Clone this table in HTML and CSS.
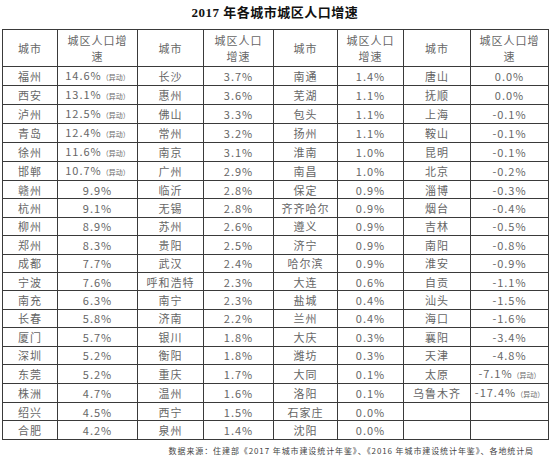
FILE: index.html
```html
<!DOCTYPE html>
<html lang="zh">
<head>
<meta charset="utf-8">
<link rel="stylesheet" href="styles.css">
</head>
<body>
<div class="page">
  <h1 class="title">2017 年各城市城区人口增速</h1>
  <table class="grid">
    <colgroup>
      <col class="c1"><col class="c2"><col class="c3"><col class="c4">
      <col class="c5"><col class="c6"><col class="c7"><col class="c8">
    </colgroup>
    <thead>
      <tr>
        <th>城市</th><th>城区人口增<br>速</th>
        <th>城市</th><th>城区人口<br>增速</th>
        <th>城市</th><th>城区人口<br>增速</th>
        <th>城市</th><th>城区人口增<br>速</th>
      </tr>
    </thead>
    <tbody>
      <tr><td>福州</td><td>14.6%<span class="note">（异动）</span></td><td>长沙</td><td>3.7%</td><td>南通</td><td>1.4%</td><td>唐山</td><td>0.0%</td></tr>
      <tr><td>西安</td><td>13.1%<span class="note">（异动）</span></td><td>惠州</td><td>3.6%</td><td>芜湖</td><td>1.1%</td><td>抚顺</td><td>0.0%</td></tr>
      <tr><td>泸州</td><td>12.5%<span class="note">（异动）</span></td><td>佛山</td><td>3.3%</td><td>包头</td><td>1.1%</td><td>上海</td><td>-0.1%</td></tr>
      <tr><td>青岛</td><td>12.4%<span class="note">（异动）</span></td><td>常州</td><td>3.2%</td><td>扬州</td><td>1.1%</td><td>鞍山</td><td>-0.1%</td></tr>
      <tr><td>徐州</td><td>11.6%<span class="note">（异动）</span></td><td>南京</td><td>3.1%</td><td>淮南</td><td>1.0%</td><td>昆明</td><td>-0.1%</td></tr>
      <tr><td>邯郸</td><td>10.7%<span class="note">（异动）</span></td><td>广州</td><td>2.9%</td><td>南昌</td><td>1.0%</td><td>北京</td><td>-0.2%</td></tr>
      <tr><td>赣州</td><td>9.9%</td><td>临沂</td><td>2.8%</td><td>保定</td><td>0.9%</td><td>淄博</td><td>-0.3%</td></tr>
      <tr><td>杭州</td><td>9.1%</td><td>无锡</td><td>2.8%</td><td>齐齐哈尔</td><td>0.9%</td><td>烟台</td><td>-0.4%</td></tr>
      <tr><td>柳州</td><td>8.9%</td><td>苏州</td><td>2.6%</td><td>遵义</td><td>0.9%</td><td>吉林</td><td>-0.5%</td></tr>
      <tr><td>郑州</td><td>8.3%</td><td>贵阳</td><td>2.5%</td><td>济宁</td><td>0.9%</td><td>南阳</td><td>-0.8%</td></tr>
      <tr><td>成都</td><td>7.7%</td><td>武汉</td><td>2.4%</td><td>哈尔滨</td><td>0.9%</td><td>淮安</td><td>-0.9%</td></tr>
      <tr><td>宁波</td><td>7.6%</td><td>呼和浩特</td><td>2.3%</td><td>大连</td><td>0.6%</td><td>自贡</td><td>-1.1%</td></tr>
      <tr><td>南充</td><td>6.3%</td><td>南宁</td><td>2.3%</td><td>盐城</td><td>0.4%</td><td>汕头</td><td>-1.5%</td></tr>
      <tr><td>长春</td><td>5.8%</td><td>济南</td><td>2.2%</td><td>兰州</td><td>0.4%</td><td>海口</td><td>-1.6%</td></tr>
      <tr><td>厦门</td><td>5.7%</td><td>银川</td><td>1.8%</td><td>大庆</td><td>0.3%</td><td>襄阳</td><td>-3.4%</td></tr>
      <tr><td>深圳</td><td>5.2%</td><td>衡阳</td><td>1.8%</td><td>潍坊</td><td>0.3%</td><td>天津</td><td>-4.8%</td></tr>
      <tr><td>东莞</td><td>5.2%</td><td>重庆</td><td>1.7%</td><td>大同</td><td>0.1%</td><td>太原</td><td>-7.1%<span class="note">（异动）</span></td></tr>
      <tr><td>株洲</td><td>4.7%</td><td>温州</td><td>1.6%</td><td>洛阳</td><td>0.1%</td><td>乌鲁木齐</td><td>-17.4%<span class="note">（异动）</span></td></tr>
      <tr><td>绍兴</td><td>4.5%</td><td>西宁</td><td>1.5%</td><td>石家庄</td><td>0.0%</td><td></td><td></td></tr>
      <tr><td>合肥</td><td>4.2%</td><td>泉州</td><td>1.4%</td><td>沈阳</td><td>0.0%</td><td></td><td></td></tr>
    </tbody>
  </table>
  <p class="source">数据来源：住建部《2017 年城市建设统计年鉴》、《2016 年城市建设统计年鉴》、各地统计局</p>
</div>
</body>
</html>
```

FILE: styles.css
```css
html, body {
  margin: 0;
  padding: 0;
  background: #ffffff;
}

.page {
  width: 550px;
  height: 459px;
  padding: 0 2px;
  box-sizing: border-box;
  font-family: "Noto Sans CJK SC", "Noto Sans", sans-serif;
}

.title {
  margin: 0;
  height: 29px;
  line-height: 26px;
  text-align: center;
  font-family: "Liberation Serif", "Noto Sans CJK SC", serif;
  font-size: 13px;
  font-weight: bold;
  color: #111;
  letter-spacing: 0.5px;
}

.grid {
  width: 546px;
  border-collapse: collapse;
  table-layout: fixed;
  color: #666;
  font-size: 11px;
}

.c1 { width: 55px; }
.c2 { width: 80px; }
.c3 { width: 66px; }
.c4 { width: 70px; }
.c5 { width: 64px; }
.c6 { width: 66px; }
.c7 { width: 67px; }
.c8 { width: 78px; }

.grid th,
.grid td {
  border: 1px solid #3a3a3a;
  padding: 0;
  text-align: center;
  white-space: nowrap;
  letter-spacing: 1px;
}

.grid th {
  height: 36px;
  font-weight: normal;
  line-height: 16px;
}

.grid td {
  height: 17.4px;
  line-height: 16px;
}

.note {
  font-size: 7px;
  letter-spacing: 0;
}

.source {
  margin: 0;
  padding: 5px 14px 0 0;
  text-align: right;
  font-size: 8px;
  color: #444;
  letter-spacing: 0.9px;
  font-weight: normal;
}
```
